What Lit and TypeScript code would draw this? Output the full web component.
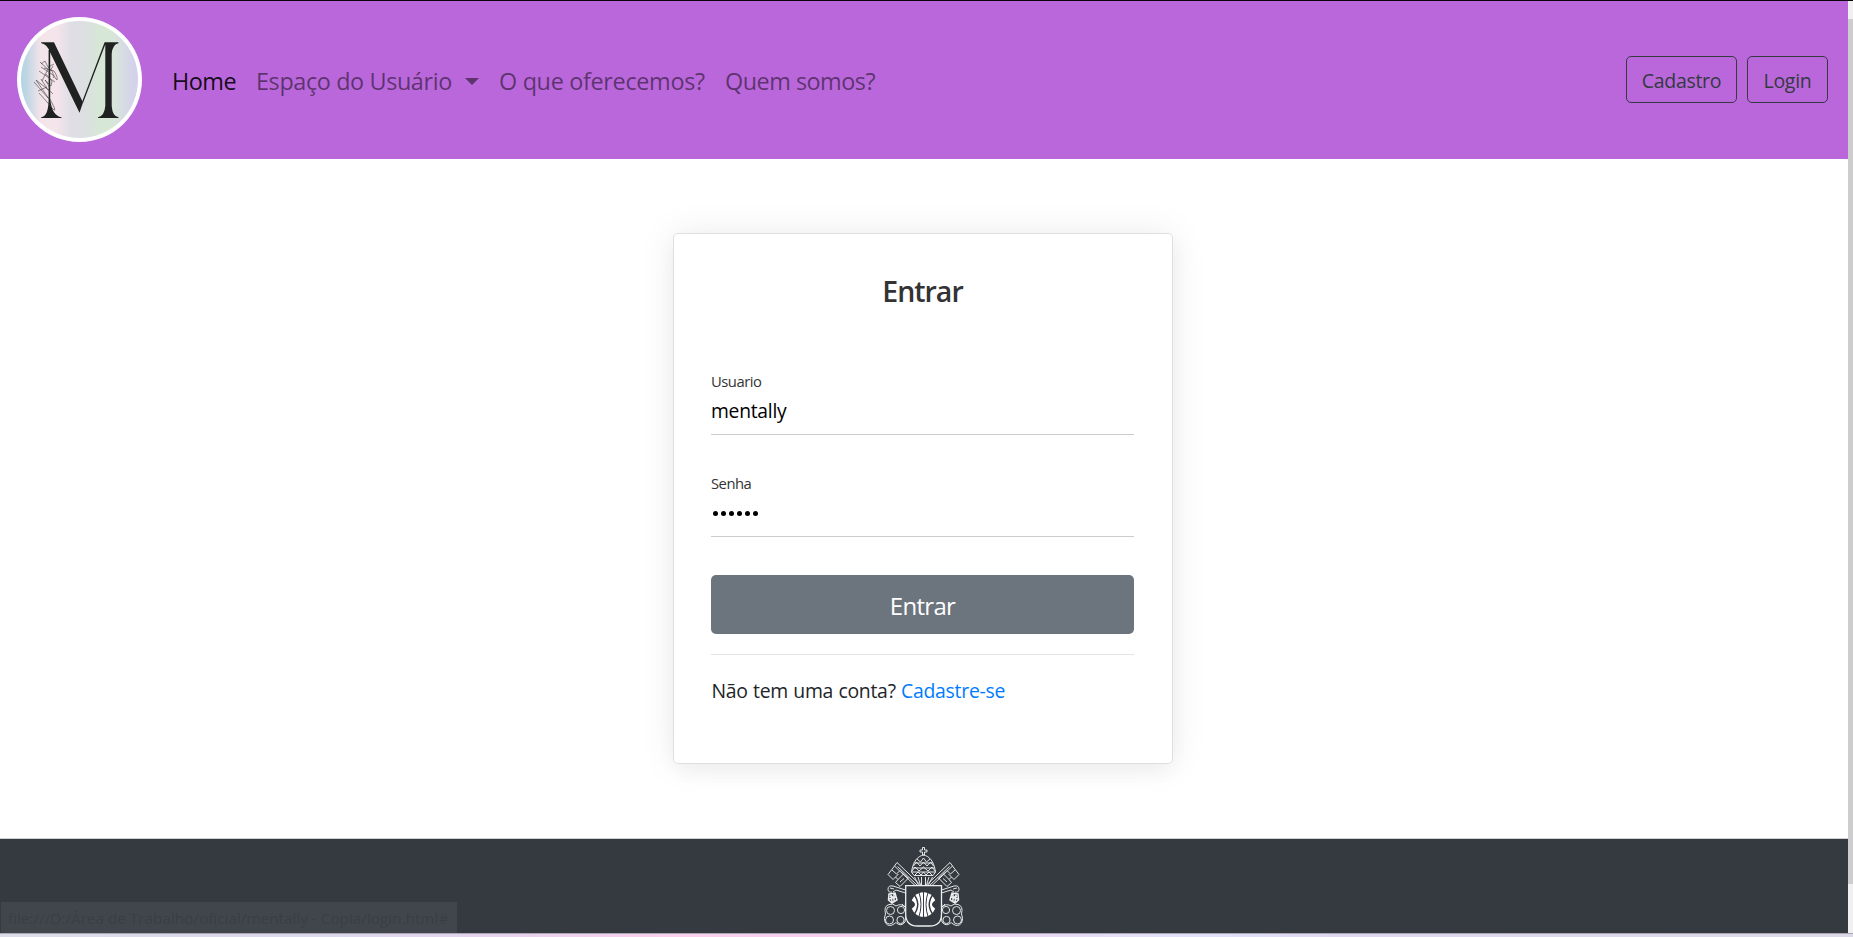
import { LitElement, html, css, svg } from "lit";
import { customElement } from "lit/decorators.js";

@customElement("brand-logo")
class BrandLogo extends LitElement {
  static styles = css`
    :host { display: block; width: 125px; height: 125px; }
    svg { display: block; }
  `;
  render() {
    return html`<svg width="125" height="125" viewBox="0 0 125 125">
      <defs><linearGradient id="g">
        <stop offset="0" stop-color="#b4d3e2" /><stop offset=".05" stop-color="#c0d6e3" /><stop offset=".17" stop-color="#f3e4ea" />
        <stop offset=".3" stop-color="#f5e5ea" /><stop offset=".42" stop-color="#e0dee5" /><stop offset=".54" stop-color="#dcdfe2" />
        <stop offset=".68" stop-color="#d6e8d5" /><stop offset=".8" stop-color="#d8e5da" /><stop offset=".92" stop-color="#d5d6e8" /><stop offset="1" stop-color="#d3d0ed" />
      </linearGradient></defs>
      <circle cx="62.5" cy="62.5" r="62.5" fill="#fff" />
      <circle cx="62.5" cy="62.5" r="58.5" fill="url(#g)" />
      <g fill="#202222">
        <path d="M24 25.300H37L66 85.500L62.500 95.800L33.200 35.500Q30 27 24.500 26.200Z" />
        <path d="M87.600 25.300H101.500V26.200Q95.500 27 94.700 37V89Q95.500 99.500 101.500 100.200V101H81V100.200Q87.500 99 88.300 89V27.500L66 86L65.200 84.500Z" />
        <path d="M31.600 33H33.200V82Q35 99 44.500 100.200V101H24.200V100.200Q31 99.500 31.600 84Z" />
      </g>
      <g fill="none" stroke="#3c3c3e" stroke-width=".6" stroke-linejoin="round">
        <path d="M17 65L31 81Q33 83 30 79L19 63L34 75L36 77M21 74L30 70M24 62L31 73Q34 73 32 69L28 63L34 69L35 64L29 57" />
        <path d="M22 54L38 65M25 64L31 52M24 50L36 58Q38 60 36 61M23 45L33 54L36 49M24 47L28 44L31 50L37 47M27 51L37 54Q41 60 40 63Q38 62 35 54L31 50" />
        <path d="M22 76Q31 86 36 92Q39 95 37 90L33 82" />
      </g>
    </svg>`;
  }
}

@customElement("crest-emblem")
class CrestEmblem extends LitElement {
  static styles = css`
    :host { display: block; width: 79px; height: 80px; }
    svg { display: block; }
  `;
  side() {
    return svg`
      <path d="M36.500 38L13 15.500L10.500 19L32 39.500M13.500 19.500L33 38" />
      <path d="M10.500 19L4 27.500L9 32.500L11.500 30L14 32.500L11.500 35.500L16 39.500L25 30.500M8 23L12.500 27L16 23.500M11.500 30L14.500 27M14 32.500L19.500 27L24 31M19.500 27L17 24.500M16 35L20 31.500" />
      <path d="M21.500 43L9 39Q4 38 4 42.500Q4.500 46 8 45M21.500 46L12 43L9 45M6 41L10 42" />
      <path d="M5 47L11 46L13 53L8 56L4.500 53ZM6 49L11 51M5 52L12 50M7 47L8 55M10 47L10 54" stroke-width="1.500" />
      <circle cx="6.500" cy="63.500" r="4" /><circle cx="17" cy="63" r="3.600" />
      <circle cx="5.500" cy="73" r="4" /><circle cx="16.500" cy="73" r="3.600" />
      <path d="M1.500 67Q-.5 59 5 57.500Q9 56 12 59Q17 56 21 60L21.500 56M1.500 67Q-1 72 1.500 76Q5 80.500 10 77Q12 75 12.500 76Q17 80 21 75L22 67M18 57L22 61" />`;
  }
  render() {
    return html`<svg width="79" height="80" viewBox="0 0 79 80" fill="none" stroke="#eceeef" stroke-width=".95">
      <g>${this.side()}</g>
      <g transform="matrix(-1 0 0 1 79 0)">${this.side()}</g>
      <path d="M38.500 .5H40.500V3H43V5H40.500V8H38.500V5H36V3H38.500ZM39.500 8C34 9 29 14 27.500 25L30 28.500H49L51.500 25C50 14 45 9 39.500 8ZM30.500 16H48.500M28.500 21H50.500M27.500 25H51.500" />
      <path d="M29.500 19L32.500 15L36 19L39.500 15L43 19L46.500 15L49.500 19M28 24L31 20L35 24L39.500 20L44 24L48 20L51 24M33 12L36.500 15L39.500 11L42.500 15L46 12M31 28L34 25L37 28L39.500 25L42 28L45 25L48 28" />
      <path d="M30.500 30L34.500 38M34 30L36.500 38M37.500 30V38M41.500 30V38M45 30L42.500 38M48.500 30L44.500 38" />
      <path d="M21.700 38.700H57.500V67Q57.500 79 45.500 79H33.700Q21.700 79 21.700 67Z" stroke-width="1.300" fill="#343a40" />
      <circle cx="39.500" cy="57.500" r="12.300" fill="#fff" stroke="none" />
      <path d="M39.500 45V70M34.500 44Q39.500 57.500 34.500 71M44.500 44Q39.500 57.500 44.500 71" stroke="#343a40" stroke-width="1" />
      <path d="M29 46Q38.500 57.500 29 69M50 46Q40.500 57.500 50 69" stroke="#343a40" stroke-width="1.500" />
      <path d="M26 52.500Q36 57.500 26 62.500ZM53 52.500Q43 57.500 53 62.500Z" fill="#343a40" stroke="none" />
    </svg>`;
  }
}

@customElement("app-root")
class AppRoot extends LitElement {
  static styles = css`
    :host { display: block; height: 937px; overflow: hidden; font-family: "Open Sans", "Noto Sans", sans-serif; color: #212529; }
    * { box-sizing: border-box; }
    .window { height: 937px; display: grid; grid-template-rows: 1px 932px 4px; }
    .top { background: #08040a; }
    .view { display: grid; grid-template-columns: 1fr 5px; position: relative; }
    .page { display: grid; grid-template-rows: 158px 679px 95px; }
    .scroll { background: #f0f0f0; padding-top: 18px; }
    .thumb { height: 865px; background: #cdcdcd; }
    .desk { border-top: 1px solid #aaa6b2; background: linear-gradient(90deg, #dcdce8, #dbd8ec 18%, #e6d3ee 27%, #fbd0ec 36%, #f6d0ee 45%, #f0d2f1 51%, #e4def6 60%, #e0e2fa 65%, #dfd7f0 72%, #dbd8ea 85%, #dbd9e6 100%); }
    nav { background: #b967db; display: flex; align-items: center; padding: 0 20px 1px 17px; }
    .links { display: flex; margin-left: 30px; padding-top: 3px; flex: 1; }
    .links a { font-size: 23.4px; line-height: 36px; color: rgba(0,0,0,.5); white-space: nowrap; display: flex; align-items: center; letter-spacing: -.38px; }
    .links .on { color: rgba(0,0,0,.9); }
    .t { display: inline-block; white-space: nowrap; }
    .links .home { width: 84px; letter-spacing: -.5px; }
    .links .space { width: 243px; }
    .links .offer { width: 226px; letter-spacing: -.32px; }
    .links .who { letter-spacing: -.5px; }
    .caret { margin-left: 13px; border: 7px solid transparent; border-top-color: currentColor; border-bottom: 0; }
    .btns { display: flex; gap: 10px; }
    .btns button { height: 47px; border: 1px solid #343a40; border-radius: 5px; background: none; color: #343a40; font: 19.5px "Open Sans", sans-serif; letter-spacing: -.3px; padding: 2px 0 0; }
    .cad { width: 111px; }
    .log { width: 81px; }
    main { background: #fff; padding-top: 74px; display: flex; justify-content: center; align-items: flex-start; padding-right: 3px; }
    .card { width: 500px; height: 531px; border: 1px solid #dfdfdf; border-radius: 5px; box-shadow: 0 8px 20px rgba(0,0,0,.03), 0 0 36px rgba(0,0,0,.08); padding: 38px 38px 0 37px; display: flex; flex-direction: column; }
    h5 { margin: 0 0 59px; padding-left: 1px; text-align: center; font-size: 28.500px; line-height: 38px; padding-bottom: 2px; font-weight: 600; color: #333; letter-spacing: -1px; }
    label { font-size: 14.800px; line-height: 20px; color: #333; letter-spacing: -.5px; padding-left: .5px; }
    .field { height: 30px; margin-top: 6px; font-size: 19.300px; letter-spacing: -.25px; line-height: 28px; color: #000; padding-left: .5px; }
    .row { height: 64px; flex: none; border-bottom: 1px solid #ccc; margin-bottom: 38px; display: flex; flex-direction: column; }
    .dots { display: flex; gap: 3px; padding: 18px 0 0 2px; }
    .dots i { width: 5px; height: 5px; border-radius: 50%; background: #000; }
    .go { height: 59px; border: 0; border-radius: 5px; background: #6c757d; color: #fff; font: 24px "Open Sans", sans-serif; letter-spacing: -.7px; padding: 1px 0 0 1px; }
    .rule { height: 1px; background: #e3e3e3; margin: 20px 0 21px; }
    p { margin: 0; font-size: 19.400px; letter-spacing: -.26px; word-spacing: .5px; line-height: 30px; padding-left: 1px; }
    p a { color: #007bff; }
    footer { background: #343a40; border-top: 1px solid #cfd1d5; display: flex; justify-content: center; padding: 8px 1px 0 0; }
    .status { position: absolute; left: 1px; bottom: 0; width: 456px; height: 31px; background: #41464c; color: #393f44; font-size: 15.300px; line-height: 33px; padding-left: 7px; white-space: nowrap; }
  `;
  render() {
    return html`<div class="window">
      <div class="top"></div>
      <div class="view">
        <div class="page">
          <nav>
            <brand-logo></brand-logo>
            <div class="links">
              <a class="on home"><span class="t">Home</span></a>
              <a class="space"><span class="t">Espaço do Usuário</span><span class="caret"></span></a>
              <a class="offer"><span class="t">O que oferecemos?</span></a>
              <a class="who"><span class="t">Quem somos?</span></a>
            </div>
            <div class="btns"><button class="cad">Cadastro</button><button class="log">Login</button></div>
          </nav>
          <main>
            <form class="card">
              <h5><span>Entrar</span></h5>
              <div class="row"><label><span>Usuario</span></label><div class="field"><span>mentally</span></div></div>
              <div class="row"><label><span>Senha</span></label><div class="dots">${Array.from({ length: 6 }, () => html`<i></i>`)}</div></div>
              <button class="go" type="button">Entrar</button>
              <div class="rule"></div>
              <p><span>Não tem uma conta?</span> <a>Cadastre-se</a></p>
            </form>
          </main>
          <footer><crest-emblem></crest-emblem></footer>
        </div>
        <div class="scroll"><div class="thumb"></div></div>
        <div class="status">file:///D:/Área de Trabalho/oficial/mentally - Copia/login.html#</div>
      </div>
      <div class="desk"></div>
    </div>`;
  }
}
